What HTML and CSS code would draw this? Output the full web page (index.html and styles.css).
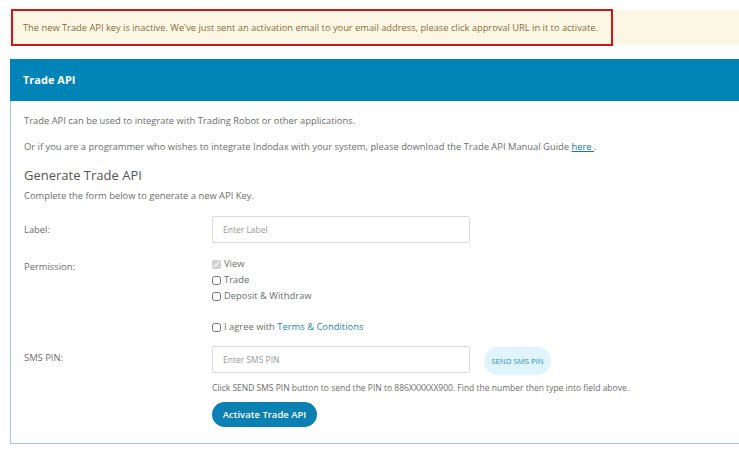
FILE: index.html
```html
<!DOCTYPE html>
<html>
  <head>
    <title>Trade API</title>
    <link rel="stylesheet" href="styles.css">
  </head>
  <body>
    <div class="page">
      <div class="alert">
        <div class="alert-text">
          The new Trade API key is inactive. We've just sent an activation email to your email address, please click approval URL in it to activate.
        </div>
      </div>

      <div class="panel">
        <div class="panel-heading">Trade API</div>
        <div class="panel-body">
          <p>Trade API can be used to integrate with Trading Robot or other applications.</p>
          <p>Or if you are a programmer who wishes to integrate Indodax with your system, please download the Trade API Manual Guide <a href="#">here </a>.</p>

          <h3>Generate Trade API</h3>
          <p class="lead">Complete the form below to generate a new API Key.</p>

          <form id="tradeApiForm">
            <div class="form-row">
              <label for="label">Label:</label>
              <div class="field">
                <input type="text" id="label" name="label" placeholder="Enter Label" />
              </div>
            </div>

            <div class="form-row permission">
              <label>Permission:</label>
              <div class="field checks">
                <label class="check"><input type="checkbox" checked disabled /><span>View</span></label>
                <label class="check"><input type="checkbox" name="trade" /><span>Trade</span></label>
                <label class="check"><input type="checkbox" name="withdraw" /><span>Deposit &amp; Withdraw</span></label>
              </div>
            </div>

            <div class="form-row agree">
              <span></span>
              <div class="field">
                <label class="check"><input type="checkbox" name="agree" /><span>I agree with <a href="#">Terms &amp; Conditions</a></span></label>
              </div>
            </div>

            <div class="form-row sms">
              <label for="smsPin">SMS PIN:</label>
              <div class="field">
                <div class="pin-line">
                  <input type="text" id="smsPin" name="smsPin" placeholder="Enter SMS PIN" />
                  <button type="button" class="btn-sms">SEND SMS PIN</button>
                </div>
                <div class="help">Click SEND SMS PIN button to send the PIN to 886XXXXXX900. Find the number then type into field above.</div>
                <button type="submit" class="btn-activate">Activate Trade API</button>
              </div>
            </div>
          </form>
        </div>
      </div>
    </div>
  </body>
</html>
```

FILE: styles.css
```css
html,
body {
  margin: 0;
  padding: 0;
  overflow: hidden;
  background: #fff;
}

body {
  font-family: "Open Sans", Arial, sans-serif;
  font-size: 9.4px;
  color: #6d6d6d;
}

.page {
  width: 760px;
  padding: 10px 0 0 10px;
}

.alert {
  background-color: #fcf7e4;
  color: #8a6d3b;
  height: 35px;
  display: flex;
  align-items: stretch;
}

.alert-text {
  border: 2px solid #d3141b;
  padding: 0 10px;
  display: flex;
  align-items: center;
  width: 578px;
  margin-left: 1px;
  margin-top: -1px;
  height: 33px;
  font-size: 9.3px;
  white-space: nowrap;
}

.panel {
  margin-top: 14px;
  border: 1px solid #9dcad8;
}

.panel-heading {
  background-color: #0083b7;
  color: white;
  font-weight: bold;
  font-size: 11px;
  height: 42px;
  line-height: 42px;
  padding-left: 13px;
  margin: -1px -1px 0 -1px;
}

.panel-body {
  padding: 13px 13px 16px 13px;
}

.panel-body p {
  margin: 0 0 12px 0;
  line-height: 14px;
}

.panel-body a {
  color: #2a84b5;
  text-decoration: none;
}

.panel-body p a {
  color: #1478ab;
  text-decoration: underline;
}

h3 {
  font-size: 13px;
  font-weight: 500;
  color: #555;
  margin: 0 0 5px 0;
  line-height: 18px;
}

.panel-body p.lead {
  margin-bottom: 13px;
}

.form-row {
  display: flex;
  align-items: flex-start;
}

.form-row > label,
.form-row > span {
  width: 188px;
  flex-shrink: 0;
}

.field {
  flex: 1;
}

.form-row input[type="text"] {
  width: 258px;
  height: 27px;
  box-sizing: border-box;
  border: 1px solid #dcdcdc;
  border-radius: 2px;
  padding: 0 10px;
  font-family: inherit;
  font-size: 8.5px;
  color: #555;
}

.form-row input::placeholder {
  color: #9a9a9a;
}

.form-row:first-child > label {
  line-height: 27px;
}

.permission {
  margin-top: 12px;
}

.permission > label {
  margin-top: 5px;
}

.checks {
  display: flex;
  flex-direction: column;
}

.check {
  display: flex;
  align-items: center;
  height: 16px;
}

.check input {
  width: 9px;
  height: 9px;
  margin: 2px 3px 0 0;
}

.agree {
  margin-top: 15px;
}

.sms {
  margin-top: 9px;
}

.sms > label {
  line-height: 27px;
  margin-top: 1px;
}

.pin-line {
  display: flex;
  align-items: center;
}

.btn-sms {
  margin-left: 14px;
  margin-top: 4px;
  width: 67px;
  height: 28px;
  border: none;
  border-radius: 14px;
  background-color: #dff4fd;
  color: #2a8fc3;
  font-family: inherit;
  font-size: 7.8px;
  cursor: pointer;
  padding: 0;
}

.help {
  font-size: 8.5px;
  margin-top: 6px;
  line-height: 14px;
}

.btn-activate {
  margin-top: 7px;
  width: 105px;
  height: 25px;
  border: none;
  border-radius: 13px;
  background-color: #0a80b3;
  color: white;
  font-family: inherit;
  font-weight: 600;
  font-size: 9.5px;
  cursor: pointer;
  padding: 0;
}
```
